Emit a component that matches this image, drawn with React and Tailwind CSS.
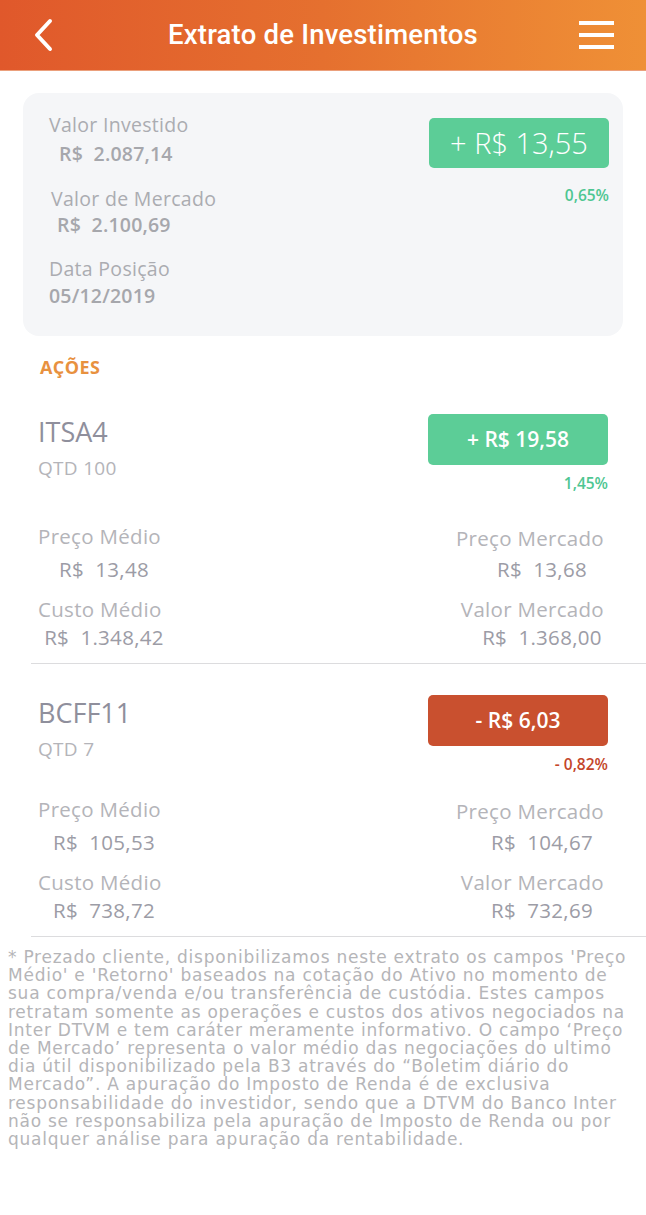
import React from 'react';

const font = { fontFamily: '"Open Sans", "Liberation Sans", sans-serif' };

const disclaimer = [
    "* Prezado cliente, disponibilizamos neste extrato os campos 'Preço",
    "Médio' e 'Retorno' baseados na cotação do Ativo no momento de",
    'sua compra/venda e/ou transferência de custódia. Estes campos',
    'retratam somente as operações e custos dos ativos negociados na',
    'Inter DTVM e tem caráter meramente informativo. O campo ‘Preço',
    'de Mercado’ representa o valor médio das negociações do ultimo',
    'dia útil disponibilizado pela B3 através do “Boletim diário do',
    'Mercado”. A apuração do Imposto de Renda é de exclusiva',
    'responsabilidade do investidor, sendo que a DTVM do Banco Inter',
    'não se responsabiliza pela apuração de Imposto de Renda ou por',
    'qualquer análise para apuração da rentabilidade.',
];

const stocks = [
    {
        name: 'ITSA4',
        qtd: 'QTD 100',
        result: '+ R$ 19,58',
        pct: '1,45%',
        up: true,
        gap: 'mt-[33px]',
        precoMedio: '13,48',
        precoMercado: '13,68',
        custoMedio: '1.348,42',
        valorMercado: '1.368,00',
    },
    {
        name: 'BCFF11',
        qtd: 'QTD 7',
        result: '- R$ 6,03',
        pct: '- 0,82%',
        up: false,
        gap: 'mt-[25px]',
        precoMedio: '105,53',
        precoMercado: '104,67',
        custoMedio: '738,72',
        valorMercado: '732,69',
    },
];

function Header() {
    return (
        <div className="grid h-[71px] grid-cols-[1fr_auto_1fr] items-center border-b border-[#eba07c] bg-linear-to-r from-[#e0582b] via-[#e5702f] to-[#ef9036] px-[30px]">
            <svg width="24" height="34" viewBox="0 0 24 34" className="ml-[2px]">
                <path d="M18 3 L5 17 L18 31" fill="none" stroke="white" strokeWidth="4" strokeLinecap="round" strokeLinejoin="round" />
            </svg>
            <h1 className="text-[27.5px] font-medium leading-none tracking-[0.2px] text-white" style={{ fontFamily: 'Roboto, "Liberation Sans", sans-serif' }}>
                Extrato de Investimentos
            </h1>
            <div className="flex flex-col items-end gap-[8px] pr-[2px]">
                <span className="block h-[4px] w-[35px] bg-white" />
                <span className="block h-[4px] w-[35px] bg-white" />
                <span className="block h-[4px] w-[35px] bg-white" />
            </div>
        </div>
    );
}

function Summary() {
    const label = 'text-[19.5px] leading-[22px] tracking-[0.3px] text-[#abacb1]';
    const value = 'whitespace-pre text-[19.5px] font-semibold leading-[22px] tracking-[0.2px] text-[#a6a7ac]';
    return (
        <div className="mx-[23px] mt-[22px] flex justify-between rounded-[16px] bg-[#f5f6f8] pb-[29px] pl-[26px] pr-[14px] pt-[21px]">
            <div className="flex flex-col">
                <span className={label}>Valor Investido</span>
                <span className={`${value} ml-[10px] mt-[7px]`}>R$  2.087,14</span>
                <span className={`${label} ml-[2px] mt-[23px]`}>Valor de Mercado</span>
                <span className={`${value} ml-[8px] mt-[4px]`}>R$  2.100,69</span>
                <span className={`${label} mt-[22px]`}>Data Posição</span>
                <span className={`${value} mt-[5px]`}>05/12/2019</span>
            </div>
            <div className="mt-[4px] flex flex-col items-end">
                <div className="flex h-[50px] w-[180px] items-center justify-center rounded-[5px] bg-[#5ccd97] text-[29px] font-light text-white">
                    + R$ 13,55
                </div>
                <span className="mt-[18px] text-[15.5px] font-semibold leading-[18px] text-[#4ec692]">0,65%</span>
            </div>
        </div>
    );
}

function Stock({ s }) {
    const labelCls = 'text-[20.5px] leading-[22px] tracking-[0.3px] text-[#b4b4b9]';
    const valueCls = 'w-[132px] whitespace-pre text-center text-[20.5px] leading-[22px] tracking-[0.3px] text-[#9c9ca6]';
    return (
        <div>
            <div className="flex justify-between px-[38px]">
                <div className="flex flex-col pt-[4px]">
                    <span className="text-[27px] leading-[28px] text-[#8f8f9c]">{s.name}</span>
                    <span className="mt-[12px] text-[19px] leading-[20px] tracking-[0.3px] text-[#b4b4b9]">{s.qtd}</span>
                </div>
                <div className="flex flex-col items-end">
                    <div
                        className={
                            s.up
                                ? 'flex h-[51px] w-[180px] items-center justify-center rounded-[5px] bg-[#5ccd97] text-[21px] font-semibold text-white'
                                : 'flex h-[51px] w-[180px] items-center justify-center rounded-[5px] bg-[#c9502f] text-[21px] font-semibold text-white'
                        }
                    >
                        {s.result}
                    </div>
                    <span
                        className={
                            s.up
                                ? 'mt-[9px] text-[15.5px] font-semibold leading-[18px] text-[#4ec692]'
                                : 'mt-[9px] text-[15.5px] font-semibold leading-[18px] text-[#c4462a]'
                        }
                    >
                        {s.pct}
                    </span>
                </div>
            </div>
            <div className={`${s.gap} flex justify-between px-[38px]`}>
                <div className="flex flex-col">
                    <span className={labelCls}>Preço Médio</span>
                    <span className={`${valueCls} mt-[11px]`}>{'R$  ' + s.precoMedio}</span>
                    <span className={`${labelCls} mt-[18px]`}>Custo Médio</span>
                    <span className={`${valueCls} mt-[6px]`}>{'R$  ' + s.custoMedio}</span>
                </div>
                <div className="flex flex-col items-end">
                    <span className={`${labelCls} mt-[2px] pr-[4px]`}>Preço Mercado</span>
                    <span className={`${valueCls} mt-[9px]`}>{'R$  ' + s.precoMercado}</span>
                    <span className={`${labelCls} mt-[18px] pr-[4px]`}>Valor Mercado</span>
                    <span className={`${valueCls} mt-[6px]`}>{'R$  ' + s.valorMercado}</span>
                </div>
            </div>
            <div className="ml-[31px] mt-[15px] h-px bg-[#dcdcde]" />
        </div>
    );
}

export default function App() {
    return (
        <div className="min-h-[1215px] w-[646px] bg-white" style={font}>
            <Header />
            <Summary />
            <div className="ml-[40px] mt-[21px] text-[18px] font-bold leading-[20px] tracking-[0.4px] text-[#e8913f]">AÇÕES</div>
            <div className="mt-[37px] flex flex-col gap-[31px]">
                {stocks.map((s) => (
                    <Stock key={s.name} s={s} />
                ))}
            </div>
            <div
                className="mt-[11px] pl-[8px] text-[17px] leading-[18.2px] tracking-[0.75px] text-[#b5b5b8]"
                style={{ fontFamily: '"DejaVu Sans", "Open Sans", sans-serif' }}
            >
                {disclaimer.map((line) => (
                    <div key={line} className="whitespace-nowrap">
                        {line}
                    </div>
                ))}
            </div>
        </div>
    );
}
